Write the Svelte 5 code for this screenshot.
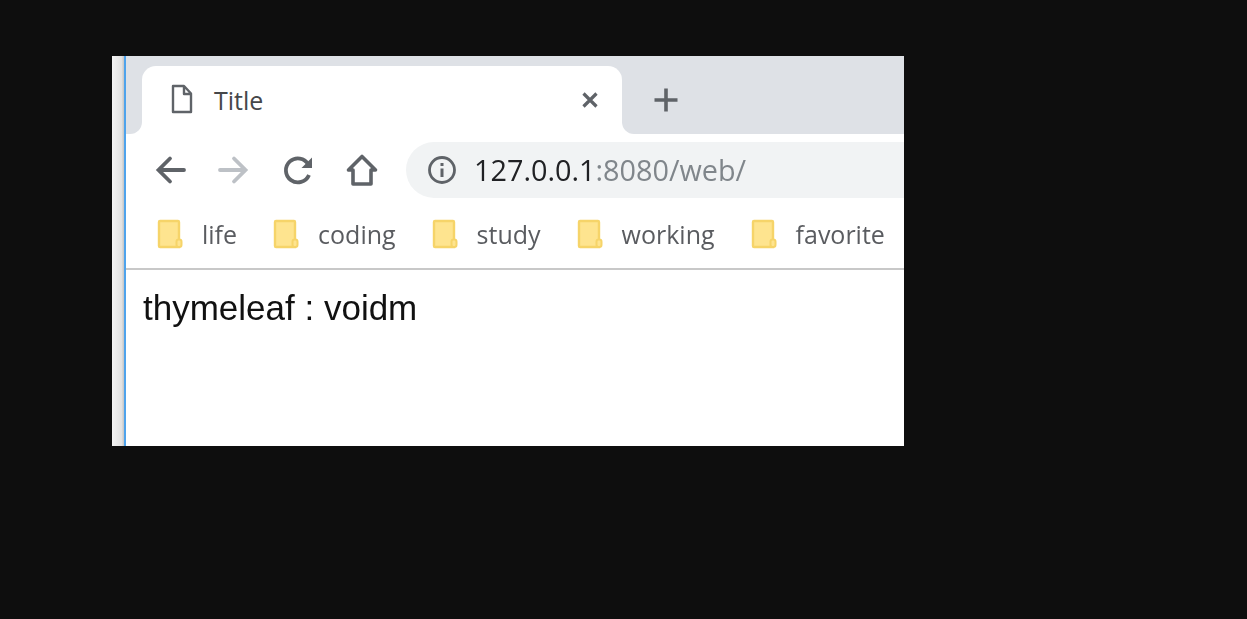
<script>
  const bookmarks = ['life', 'coding', 'study', 'working', 'favorite'];
</script>

<div class="page">
  <div class="window">
    <div class="side"></div>
    <div class="browser">
      <div class="tabstrip">
        <div class="edge"></div>
        <div class="tab-wrap">
          <div class="tab">
            <svg class="doc" width="22" height="30" viewBox="0 0 22 30">
              <path d="M2 2h11l7 7.500V28H2z M13 2v8h7" fill="none" stroke="#5f6368" stroke-width="2.400" stroke-linejoin="round" />
            </svg>
            <span class="tab-title">Title</span>
            <svg class="close" width="18" height="18" viewBox="0 0 18 18">
              <path d="M2.500 2.500l13 13M15.500 2.500l-13 13" stroke="#5f6368" stroke-width="3.200" />
            </svg>
          </div>
        </div>
        <div class="rest">
          <svg class="plus" width="26" height="26" viewBox="0 0 26 26">
            <path d="M13 1.500v23M1.500 13h23" stroke="#5f6368" stroke-width="3.600" />
          </svg>
        </div>
      </div>

      <div class="toolbar">
        <svg width="32" height="32" viewBox="0 0 32 32">
          <path d="M30 16H5M16 4.500L4.500 16 16 27.500" fill="none" stroke="#5f6368" stroke-width="3.800" stroke-linecap="round" />
        </svg>
        <svg class="forward" width="32" height="32" viewBox="0 0 32 32">
          <path d="M2 16h25M16 4.500L27.500 16 16 27.500" fill="none" stroke="#bdc1c6" stroke-width="3.800" stroke-linecap="round" />
        </svg>
        <svg class="reload" width="32" height="32" viewBox="0 0 32 32">
          <path d="M26 21a12 12 0 1 1-.6-10.500" fill="none" stroke="#5f6368" stroke-width="3.800" />
          <path d="M29 3.500V14H18.500z" fill="#5f6368" />
        </svg>
        <svg width="34" height="34" viewBox="0 0 34 34">
          <path d="M17 3.500L3.500 17H8v14h18V17h4.500z" fill="none" stroke="#5f6368" stroke-width="3.600" stroke-linejoin="round" />
        </svg>
        <div class="omnibox">
          <svg width="30" height="30" viewBox="0 0 30 30">
            <circle cx="15" cy="15" r="12.500" fill="none" stroke="#5f6368" stroke-width="2.800" />
            <path d="M13.500 13.500h3V22h-3zM13.500 8h3v3h-3z" fill="#5f6368" />
          </svg>
          <span class="url"><span class="host">127.0.0.1</span>:8080/web/</span>
        </div>
      </div>

      <div class="bookmarks">
        {#each bookmarks as name}
          <div class="bookmark">
            <svg width="26" height="30" viewBox="0 0 26 30">
              <path d="M3 2h18a1 1 0 0 1 1 1v25H3a1 1 0 0 1-1-1V3a1 1 0 0 1 1-1z" fill="#fee48f" stroke="#f6d469" stroke-width="2.400" />
              <rect x="19.500" y="20.500" width="5" height="7.500" rx="2.200" fill="#fee48f" stroke="#f6d469" stroke-width="2" />
            </svg>
            <span>{name}</span>
          </div>
        {/each}
      </div>

      <div class="content">thymeleaf : voidm</div>
    </div>
  </div>
</div>

<style>
  :global(body) {
    background: #0e0e0e;
  }

  .page {
    height: 619px;
    box-sizing: border-box;
    padding: 56px 0 0 112px;
    background: #0e0e0e;
  }

  .window {
    display: flex;
    width: 792px;
    height: 390px;
    overflow: hidden;
    background: #fff;
  }

  .side {
    width: 12px;
    flex: none;
    background: linear-gradient(to right, #f4f4f4, #e2e2e2 80%, #c4c4c4);
    border-right: 2px solid #4ea3ec;
  }

  .browser {
    flex: 1;
    min-width: 0;
    display: flex;
    flex-direction: column;
    filter: blur(0.5px);
  }

  .tabstrip {
    display: flex;
    height: 78px;
    flex: none;
  }

  .edge {
    width: 16px;
    flex: none;
    background: #dee1e6;
    border-bottom-right-radius: 12px;
  }

  .tab-wrap {
    width: 480px;
    flex: none;
    padding-top: 10px;
    box-sizing: border-box;
    background: #dee1e6;
  }

  .tab {
    display: flex;
    align-items: center;
    height: 68px;
    box-sizing: border-box;
    padding: 0 23px 0 29px;
    background: #fff;
    border-radius: 14px 14px 0 0;
  }

  .doc {
    margin-top: -2px;
  }

  .tab-title {
    margin-left: 21px;
    font: 25px "Open Sans", sans-serif;
    color: #45474a;
  }

  .close {
    margin-left: auto;
  }

  .rest {
    flex: 1;
    display: flex;
    align-items: center;
    padding: 10px 0 0 31px;
    box-sizing: border-box;
    background: #dee1e6;
    border-bottom-left-radius: 12px;
  }

  .toolbar {
    display: flex;
    align-items: center;
    flex: none;
    height: 72px;
    padding: 0 0 0 28px;
    gap: 30px;
  }

  .forward {
    margin-left: 2px;
  }

  .reload {
    margin-left: 3px;
  }

  .omnibox {
    display: flex;
    align-items: center;
    flex: 1;
    height: 56px;
    margin-left: -3px;
    padding-left: 21px;
    gap: 17px;
    background: #f1f3f4;
    border-radius: 28px 0 0 28px;
  }

  .url {
    margin-top: -2px;
    font: 28.8px "Open Sans", sans-serif;
    color: #80868b;
    white-space: nowrap;
  }

  .host {
    color: #202124;
  }

  .bookmarks {
    display: flex;
    align-items: center;
    flex: none;
    height: 62px;
    padding-left: 31px;
    gap: 36px;
    border-bottom: 2px solid #c8c8c8;
  }

  .bookmark {
    display: flex;
    align-items: center;
    gap: 19px;
    font: 25px "Open Sans", sans-serif;
    color: #5a5c60;
  }

  .bookmark span {
    margin-top: -7px;
  }

  .bookmark svg {
    margin-top: -6px;
  }

  .content {
    padding: 18px 17px 0;
    font: 35px "Liberation Sans", sans-serif;
    color: #111;
  }
</style>
